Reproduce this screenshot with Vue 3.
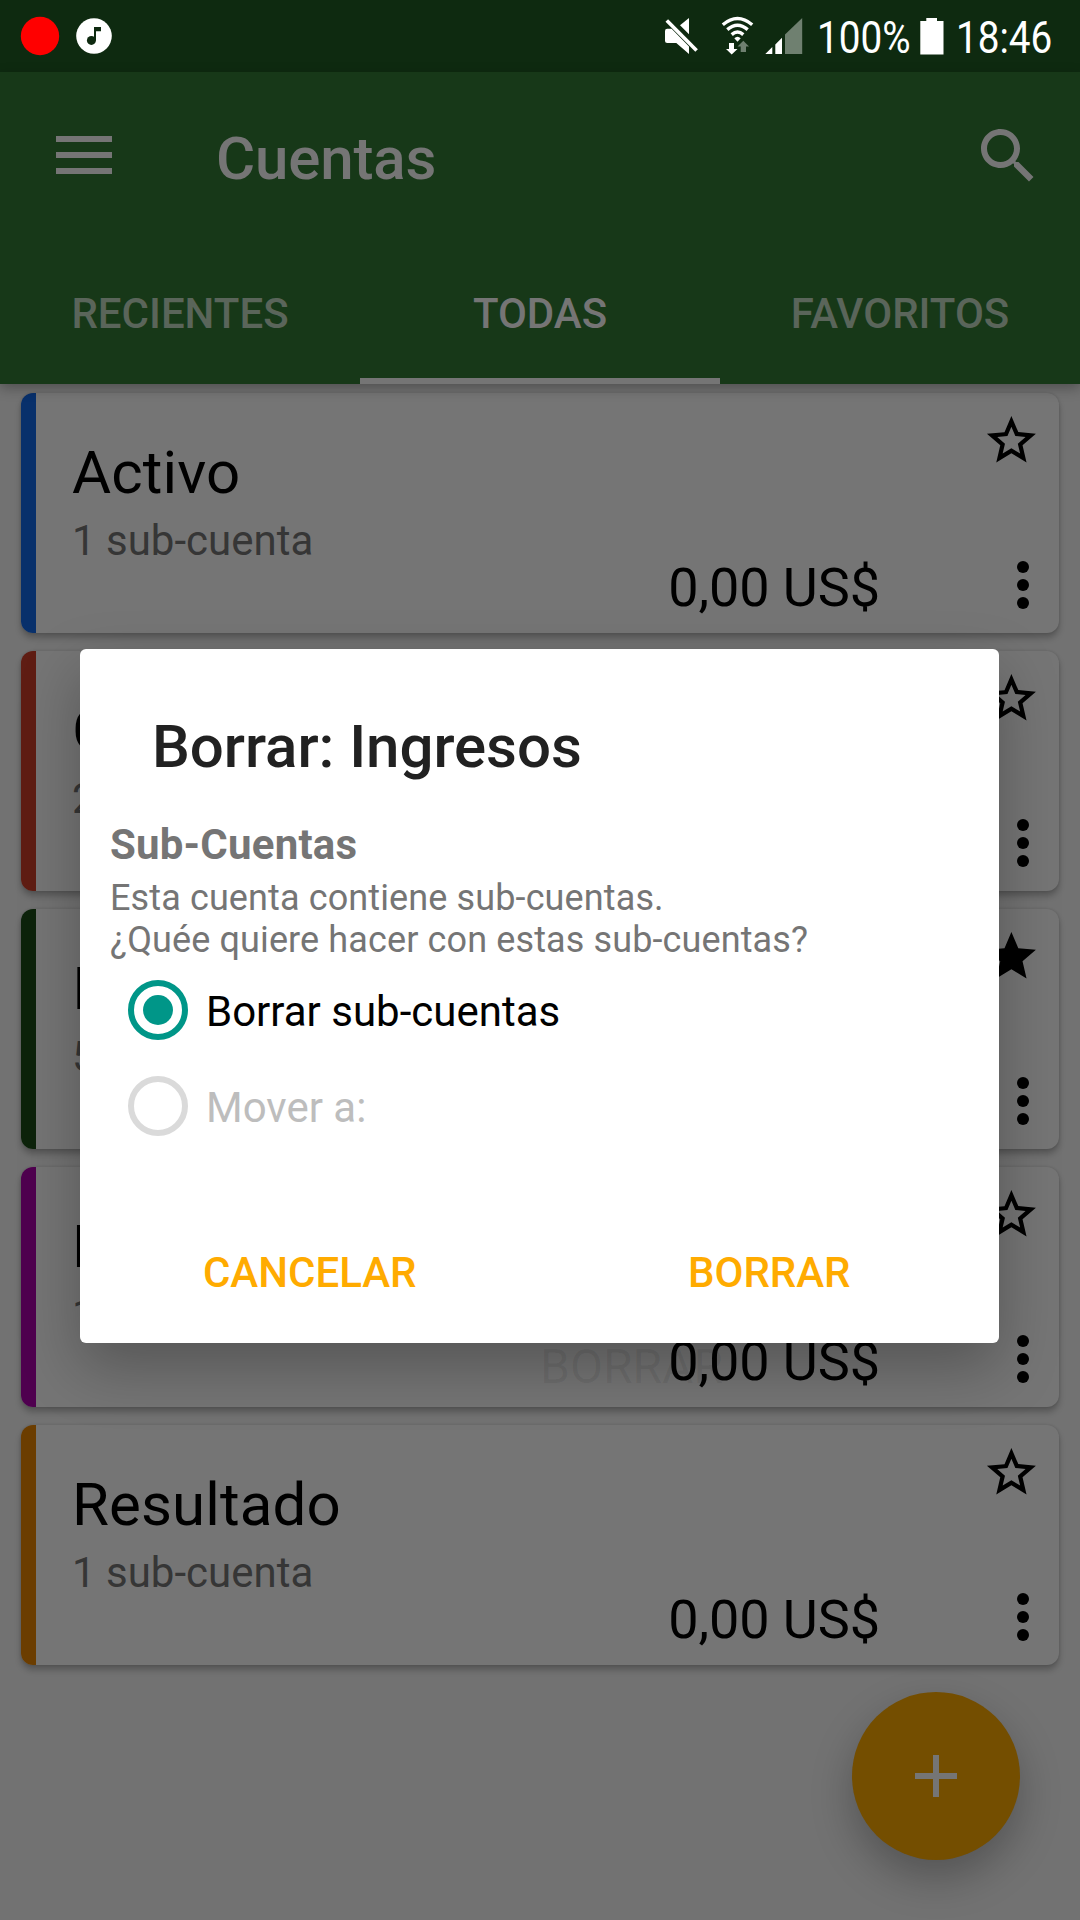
<script setup>
const accounts = [
  { name: 'Activo', sub: '1 sub-cuenta', color: '#08306b', amount: '0,00 US$', starred: false },
  { name: 'Gastos', sub: '2 sub-cuentas', color: '#5f1d13', amount: '0,00 US$', starred: false },
  { name: 'Ingresos', sub: '5 sub-cuentas', color: '#0d230b', amount: '0,00 US$', starred: true },
  { name: 'Pasivo', sub: '1 sub-cuenta', color: '#4f004f', amount: '0,00 US$', starred: false },
  { name: 'Resultado', sub: '1 sub-cuenta', color: '#6b3d00', amount: '0,00 US$', starred: false },
]
const tabs = [
  { label: 'RECIENTES', active: false },
  { label: 'TODAS', active: true },
  { label: 'FAVORITOS', active: false },
]
</script>

<template>
  <div class="screen">
    <div class="status">
      <svg class="notif" width="130" height="72" viewBox="0 0 130 72">
        <circle cx="40" cy="36" r="19.2" fill="#f00" />
        <circle cx="94" cy="36" r="17.8" fill="#fff" />
        <circle cx="91.4" cy="40.4" r="4.5" fill="#0e2a10" />
        <path d="M94 27h7v4.2h-5v9.2h-2z" fill="#0e2a10" />
      </svg>
      <svg class="signals" width="152" height="72" viewBox="0 0 152 72">
        <path fill="#fff" d="M0 31Q0 28.700 2.200 28.700H6.600L24 46.400V54L11.300 43H2.200Q0 43 0 41z" />
        <path fill="#fff" d="M15 25.300L24 18V34.300z" />
        <path d="M1.800 20.500L31.600 50.500" stroke="#fff" stroke-width="3.600" />
        <g fill="none" stroke="#fff" stroke-width="3.400">
          <path d="M57.800 24.800Q72.500 12.400 87.200 24.800" />
          <path d="M62.300 29.600Q72.500 20.800 82.700 29.600" />
          <path d="M66.700 34.600Q72.500 29.600 78.300 34.600" />
        </g>
        <path fill="#fff" d="M69.300 38.300Q72.500 35.300 75.700 38.300L72.500 41.700z" />
        <path fill="#fff" d="M64 43h5v6h3.500L66.700 54.500 61 49h3z" />
        <path fill="#6f8070" d="M78.300 40.700L84 46.500h-3V52h-5.300v-5.500h-3.200z" />
        <path fill="#fff" d="M100.300 54L107.300 47V54z M110.300 44.500L117 37.700V54h-6.700z" />
        <path fill="#6f8070" d="M120 34.500L137.200 18V54H120z" />
      </svg>
      <span class="battery-text"><span>100%</span></span>
      <svg class="battery" width="24" height="37" viewBox="0 0 24 37">
        <path fill="#fff" d="M6.300 0H17v3h6.500v33.500H.3V3h6z" />
      </svg>
      <span class="clock"><span>18:46</span></span>
    </div>

    <header class="bar">
      <div class="toolbar">
        <div class="menu"><i></i><i></i><i></i></div>
        <h1>Cuentas</h1>
        <svg class="search" width="72" height="72" viewBox="0 0 24 24" fill="#757575">
          <path d="M15.500 14h-.79l-.28-.27C15.410 12.590 16 11.110 16 9.500 16 5.910 13.090 3 9.500 3S3 5.910 3 9.500 5.910 16 9.500 16c1.610 0 3.090-.59 4.230-1.570l.27.28v.79l5 4.990L20.490 19l-4.990-5zm-6 0C7.010 14 5 11.990 5 9.500S7.010 5 9.500 5 14 7.010 14 9.500 11.990 14 9.500 14z" />
        </svg>
      </div>
      <nav class="tabs">
        <div v-for="t in tabs" :key="t.label" class="tab" :class="{ active: t.active }">{{ t.label }}</div>
      </nav>
    </header>

    <main class="list">
      <article v-for="a in accounts" :key="a.name" class="card">
        <div class="stripe" :style="{ background: a.color }"></div>
        <div class="info">
          <div class="name">{{ a.name }}</div>
          <div class="sub">{{ a.sub }}</div>
        </div>
        <div class="amount">{{ a.amount }}</div>
        <div class="actions">
          <svg class="star" viewBox="0 0 24 24">
            <path v-if="a.starred" d="M12 17.270L18.180 21l-1.640-7.030L22 9.240l-7.190-.61L12 2 9.190 8.630 2 9.240l5.460 4.730L5.820 21z" />
            <path v-else fill-rule="evenodd" d="M22 9.240l-7.190-.62L12 2 9.190 8.630 2 9.240l5.460 4.730L5.820 21 12 17.270 18.180 21l-1.630-7.030zM12 15.230L8.430 17.390 9.380 13.320 6.220 10.580 10.390 10.220 12 6.400 13.610 10.220 17.780 10.580 14.620 13.320 15.570 17.390z" />
          </svg>
          <svg class="more" viewBox="0 0 24 24">
            <circle cx="12" cy="6" r="2" /><circle cx="12" cy="12" r="2" /><circle cx="12" cy="18" r="2" />
          </svg>
        </div>
      </article>
    </main>

    <div class="fab">
      <svg width="42" height="42" viewBox="0 0 42 42"><path d="M18 0h6v18h18v6H24v18h-6V24H0v-6h18z" fill="#757575" /></svg>
    </div>

    <div class="ghost">BORRAR</div>

    <section class="dialog">
      <h2>Borrar: Ingresos</h2>
      <h3>Sub-Cuentas</h3>
      <p>Esta cuenta contiene sub-cuentas.<br />¿Quée quiere hacer con estas sub-cuentas?</p>
      <div class="option">
        <span class="radio on"></span><span>Borrar sub-cuentas</span>
      </div>
      <div class="option off">
        <span class="radio"></span><span>Mover a:</span>
      </div>
      <div class="buttons">
        <span>CANCELAR</span><span>BORRAR</span>
      </div>
    </section>
  </div>
</template>

<style>
body { margin: 0; background: #727272; }
</style>

<style scoped>
.screen {
  position: relative;
  width: 1080px;
  height: 1920px;
  overflow: hidden;
  background: #727272;
  font-family: Roboto, "Liberation Sans", sans-serif;
  color: #000;
}
svg { display: block; flex: none; }
h1, h2, h3, p { margin: 0; }

.status {
  display: flex;
  height: 72px;
  background: #0e2a10;
  color: #fff;
  font-size: 45px;
  line-height: 75px;
}
.signals { margin-left: 535px; }
.battery-text { width: 103px; box-sizing: border-box; }
.battery-text span, .clock span {
  display: inline-block;
  transform: scaleX(.86);
  transform-origin: 0 0;
}
.battery { margin-top: 18px; }
.clock { margin-left: 12px; width: 110px; }

.bar {
  position: relative;
  height: 312px;
  background: #173818;
  box-shadow: 0 4px 12px rgba(0, 0, 0, .3);
}
.toolbar { display: flex; height: 168px; }
.menu {
  display: flex;
  flex-direction: column;
  gap: 10px;
  width: 56px;
  margin: 64px 0 0 56px;
}
.menu i { height: 6px; background: #757575; }
h1 {
  flex: 1;
  margin-left: 104px;
  padding-top: 52px;
  font-size: 60px;
  line-height: 70px;
  font-weight: 500;
  letter-spacing: -.15px;
  color: #757575;
}
.search { margin: 48px 36px 0 0; }
.tabs { display: flex; height: 144px; }
.tab {
  flex: 1;
  box-sizing: border-box;
  padding-top: 49px;
  text-align: center;
  font-size: 42px;
  line-height: 50px;
  font-weight: 500;
  color: #5a655a;
}
.tab.active { color: #757575; border-bottom: 6px solid #757575; }

.list {
  display: flex;
  flex-direction: column;
  gap: 18px;
  padding: 9px 21px;
}
.card {
  display: flex;
  height: 240px;
  border-radius: 12px;
  background: #757575;
  box-shadow: 0 5px 6px rgba(0, 0, 0, .24), 0 0 3px rgba(0, 0, 0, .14);
}
.stripe { width: 15px; border-radius: 12px 0 0 12px; }
.info { flex: 1; padding: 45px 0 0 36px; }
.name { font-size: 60px; line-height: 70px; letter-spacing: .12px; }
.sub { margin-top: 8px; font-size: 42px; line-height: 50px; color: #363636; }
.amount {
  align-self: flex-end;
  padding-bottom: 13px;
  font-size: 54px;
  line-height: 64px;
  letter-spacing: -.1px;
}
.actions { display: flex; flex-direction: column; align-items: flex-end; width: 179px; }
.star { width: 58.800px; height: 58.800px; margin: 18.400px 18.600px 0 0; }
.more { width: 72px; height: 72px; margin-top: 78.800px; }

.fab {
  position: absolute;
  left: 852px;
  top: 1692px;
  width: 168px;
  height: 168px;
  display: flex;
  align-items: center;
  justify-content: center;
  border-radius: 50%;
  background: #744e00;
  box-shadow: 0 18px 40px rgba(0, 0, 0, .26);
}
.ghost {
  position: absolute;
  left: 540px;
  top: 1339px;
  font-size: 48px;
  line-height: 56px;
  color: rgba(0, 0, 0, .07);
}
.dialog {
  position: absolute;
  left: 80px;
  top: 649px;
  width: 919px;
  height: 694px;
  box-sizing: border-box;
  padding-top: 63px;
  border-radius: 6px;
  background: #fff;
  box-shadow: 0 24px 60px rgba(0, 0, 0, .27);
}
h2 { padding-left: 72px; font-size: 60px; line-height: 70px; font-weight: 500; letter-spacing: -.05px; color: #212121; }
h3 {
  margin-top: 38px;
  padding-left: 30px;
  font-size: 42px;
  line-height: 50px;
  font-weight: 700;
  letter-spacing: .2px;
  color: #757575;
}
p {
  margin: 7px 0 1px;
  padding-left: 30px;
  font-size: 36px;
  line-height: 42px;
  letter-spacing: .12px;
  color: #757575;
}
.option {
  display: flex;
  align-items: center;
  gap: 18px;
  height: 96px;
  padding-left: 48px;
  font-size: 42px;
  line-height: 50px;
}
.option span:last-child { padding-top: 3px; }
.option.off { color: #bdbdbd; }
.radio {
  display: flex;
  align-items: center;
  justify-content: center;
  box-sizing: border-box;
  width: 60px;
  height: 60px;
  border: 6px solid #dadada;
  border-radius: 50%;
}
.radio.on { border-color: #009688; }
.radio.on::after { content: ""; width: 30px; height: 30px; border-radius: 50%; background: #009688; }
.buttons {
  display: flex;
  justify-content: center;
  margin-top: 94px;
  font-size: 42px;
  line-height: 50px;
  font-weight: 500;
  color: #ffab00;
}
.buttons span { width: 460px; text-align: center; }
</style>
